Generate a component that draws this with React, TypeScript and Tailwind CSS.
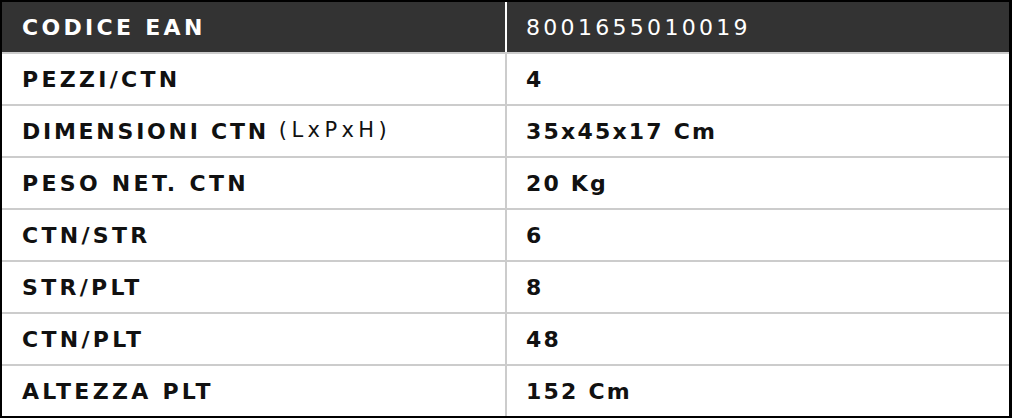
const ROWS: { label: string; note?: string; value: string }[] = [
  { label: 'PEZZI/CTN', value: '4' },
  { label: 'DIMENSIONI CTN', note: '(LxPxH)', value: '35x45x17 Cm' },
  { label: 'PESO NET. CTN', value: '20 Kg' },
  { label: 'CTN/STR', value: '6' },
  { label: 'STR/PLT', value: '8' },
  { label: 'CTN/PLT', value: '48' },
  { label: 'ALTEZZA PLT', value: '152 Cm' },
]

export default function App() {
  return (
    <div className="w-[1012px] h-[418px] bg-white font-['DejaVu_Sans','Liberation_Sans',sans-serif]">
      <div className="border-2 border-r-[3px] border-black">
        {/* Header */}
        <div className="flex h-[50px] bg-[#333333] text-white">
          <div className="w-[503px] flex items-center pl-5 text-[22px] font-bold tracking-[0.15em]">
            CODICE EAN
          </div>
          <div className="w-[2px] bg-white" />
          <div className="flex-1 flex items-center pl-[19px] text-[22px] font-normal tracking-[0.15em]">
            8001655010019
          </div>
        </div>

        {/* Body */}
        {ROWS.map(row => (
          <div key={row.label} className="flex h-[52px] border-t-2 border-[#cccccc] text-[#111111]">
            <div
              className={
                row.note
                  ? 'w-[503px] flex items-center pl-5 text-[22px] font-bold tracking-[0.125em]'
                  : 'w-[503px] flex items-center pl-5 text-[22px] font-bold tracking-[0.15em]'
              }
            >
              {row.label}
              {row.note && (
                <span className="ml-[10px] font-normal tracking-[0.21em] text-[21px]">{row.note}</span>
              )}
            </div>
            <div className="w-[2px] bg-[#cccccc]" />
            <div className="flex-1 flex items-center pl-[19px] text-[22px] font-bold tracking-[0.1em]">
              {row.value}
            </div>
          </div>
        ))}
      </div>
    </div>
  )
}
